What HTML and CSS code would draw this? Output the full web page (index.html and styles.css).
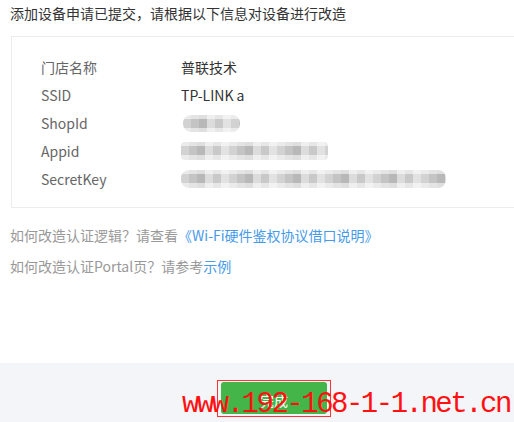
FILE: index.html
```html
<!DOCTYPE html>
<html lang="zh-CN">
<head>
  <meta charset="UTF-8">
  <title>添加设备</title>
  <link rel="stylesheet" href="styles.css">
</head>
<body>

  <div class="main">
    <p class="title">添加设备申请已提交，请根据以下信息对设备进行改造</p>

    <div class="card">
      <div class="row"><span class="label">门店名称</span><span class="value">普联技术</span></div>
      <div class="row"><span class="label">SSID</span><span class="value">TP-LINK a</span></div>
      <div class="row"><span class="label">ShopId</span><span class="value"><span class="mask mask-short"></span></span></div>
      <div class="row"><span class="label">Appid</span><span class="value"><span class="mask mask-mid"></span></span></div>
      <div class="row"><span class="label">SecretKey</span><span class="value"><span class="mask mask-long"></span></span></div>
    </div>

    <p class="help help-first">如何改造认证逻辑？请查看<a href="#">《Wi-Fi硬件鉴权协议借口说明》</a></p>
    <p class="help">如何改造认证Portal页？请参考<a href="#">示例</a></p>
  </div>

  <div class="footer">
    <button class="btn-done">完成</button>
  </div>

  <!-- screenshot annotations -->
  <div class="mark-box"></div>
  <div class="watermark">www.192-168-1-1.net.cn</div>

</body>
</html>
```

FILE: styles.css
```css
body {
  margin: 0;
  font-family: "Noto Sans CJK SC", "Noto Sans", sans-serif;
  font-size: 14px;
  color: #333;
  background-color: #fff;
  height: 422px;
  overflow: hidden;
  position: relative;
}

.main {
  height: 363px;
  padding-left: 11px;
}

.title {
  margin: 0;
  padding: 3px 0 0 0;
  margin-left: -1px;
  line-height: 20px;
}

.card {
  margin-top: 13px;
  border: 1px solid #ececec;
  border-right: none;
  padding: 16px 0 14px 29px;
}

.row {
  display: flex;
  height: 28px;
  line-height: 28px;
}

.label {
  width: 140px;
  color: #666;
}

.value {
  color: #333;
  display: flex;
  align-items: center;
}

.mask {
  display: block;
  height: 17px;
  border-radius: 8px;
  background:
    linear-gradient(180deg, rgba(255,255,255,0.55) 0 4px, transparent 4px 13px, rgba(255,255,255,0.55) 13px),
    repeating-linear-gradient(90deg, #d2d2d2 0 8px, #c4c4c4 8px 16px, #b8b8b8 16px 24px, #dcdcdc 24px 32px, #c9c9c9 32px 40px, #e2e2e2 40px 48px);
  filter: blur(0.6px);
}

.mask-short {
  width: 57px;
  margin-left: 2px;
}

.mask-mid {
  width: 147px;
  height: 18px;
  border-radius: 4px;
}

.mask-long {
  width: 265px;
  height: 18px;
}

.help {
  margin: 0;
  margin-left: -1px;
  color: #999;
  line-height: 20px;
}

.help-first {
  margin-top: 17px;
}

.help + .help {
  margin-top: 11px;
}

.help a {
  color: #459ae9;
  text-decoration: none;
}

.footer {
  height: 59px;
  background-color: #f4f5f9;
  display: flex;
  justify-content: center;
  padding-left: 34px;
  box-sizing: border-box;
}

.btn-done {
  margin-top: 19px;
  width: 106px;
  height: 32px;
  background-color: #44b549;
  border: none;
  border-radius: 3px;
  color: #fff;
  font-family: "Noto Sans CJK SC", sans-serif;
  font-size: 14px;
  padding: 3px 0 0 0;
}

.mark-box {
  position: absolute;
  left: 217px;
  top: 380px;
  width: 112px;
  height: 35px;
  border: 1px solid #f33;
}

.watermark {
  position: absolute;
  left: 182px;
  top: 388px;
  font-family: "Liberation Mono", monospace;
  font-size: 29px;
  letter-spacing: -2.5px;
  line-height: 34px;
  color: #f11;
  white-space: nowrap;
}
```
